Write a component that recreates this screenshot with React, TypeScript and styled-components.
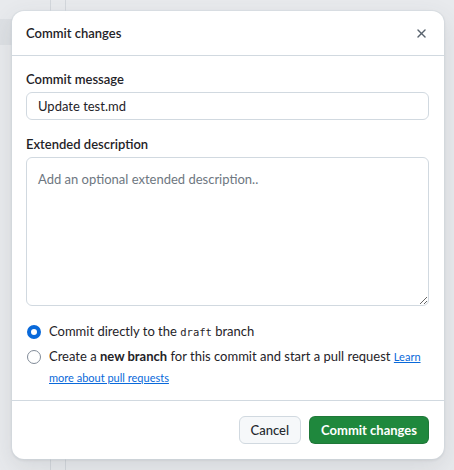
import React from 'react';
import styled, { createGlobalStyle } from 'styled-components';

const GlobalStyle = createGlobalStyle`
  html, body {
    margin: 0;
    padding: 0;
  }
  body {
    font-family: Lato, "Liberation Sans", sans-serif;
    color: #1f2328;
  }
`;

// Dimmed editor page behind the dialog: two gutter lines and a tab strip.
const Backdrop = styled.div`
  width: 454px;
  height: 470px;
  box-sizing: border-box;
  padding: 11px 10px 11px 12px;
  background-color: #e8eaed;
  background-image:
    linear-gradient(#dde0e4, #dde0e4),
    linear-gradient(#d3d7dc, #d3d7dc),
    linear-gradient(#d3d7dc, #d3d7dc);
  background-size: 12px 26px, 1px 100%, 1px 100%;
  background-position: 0 19px, 50px 0, 65px 0;
  background-repeat: no-repeat;
`;

const Dialog = styled.div`
  display: flex;
  flex-direction: column;
  height: 100%;
  background: #ffffff;
  border-radius: 12px;
  box-shadow: 0 0 0 1px rgba(209, 217, 224, 0.5), 0 8px 24px rgba(66, 74, 83, 0.12),
    0 1px 3px rgba(31, 35, 40, 0.12);
  overflow: hidden;
`;

const Header = styled.div`
  display: flex;
  align-items: center;
  justify-content: space-between;
  height: 44px;
  padding: 0 14px;
  border-bottom: 1px solid #d1d9e0;
  flex-shrink: 0;
`;

const Title = styled.h1`
  margin: 0;
  font-size: 13px;
  font-weight: 600;
  line-height: 20px;
`;

const CloseButton = styled.button`
  display: flex;
  align-items: center;
  justify-content: center;
  width: 24px;
  height: 24px;
  margin-right: -3px;
  padding: 0;
  border: 0;
  background: transparent;
  color: #59636e;
  cursor: pointer;
`;

const Body = styled.div`
  flex: 1;
  display: flex;
  flex-direction: column;
  padding: 13px 15px 0 14px;
`;

const Label = styled.label`
  display: block;
  font-size: 13px;
  font-weight: 600;
  line-height: 20px;
  margin-bottom: 3px;
`;

const Field = styled.div<{ $gap?: number }>`
  margin-bottom: ${(p) => p.$gap ?? 0}px;
`;

const TextInput = styled.input`
  display: block;
  width: 100%;
  box-sizing: border-box;
  height: 28px;
  padding: 0 11px;
  border: 1px solid #d1d9e0;
  border-radius: 6px;
  font-family: inherit;
  font-size: 13px;
  color: #1f2328;
  background: #ffffff;
  outline: none;
`;

const TextArea = styled.textarea`
  display: block;
  width: 100%;
  box-sizing: border-box;
  height: 149px;
  padding: 11px 11px;
  border: 1px solid #d1d9e0;
  border-radius: 6px;
  font-family: inherit;
  font-size: 13px;
  line-height: 20px;
  color: #1f2328;
  background: #ffffff;
  outline: none;
  resize: vertical;

  &::placeholder {
    color: #6e7781;
  }
`;

const Choices = styled.div`
  display: flex;
  flex-direction: column;
  gap: 4px;
  margin-top: 15px;
`;

const Choice = styled.label`
  display: flex;
  align-items: flex-start;
  gap: 8px;
  font-size: 13px;
  line-height: 21px;
  cursor: pointer;
`;

const Radio = styled.span<{ $checked?: boolean }>`
  flex-shrink: 0;
  box-sizing: border-box;
  width: 14px;
  height: 14px;
  margin: 4px 0 0 1px;
  border-radius: 50%;
  background: #ffffff;
  border: ${(p) => (p.$checked ? '4px solid #0969da' : '1px solid #818b98')};
`;

const Code = styled.code`
  font-family: "DejaVu Sans Mono", "Liberation Mono", monospace;
  font-size: 10.5px;
  line-height: 1;
`;

const LearnLink = styled.a`
  font-size: 11px;
  line-height: 1;
  color: #0969da;
  text-decoration: underline;
`;

const Footer = styled.div`
  display: flex;
  justify-content: flex-end;
  gap: 8px;
  padding: 15px 15px 15px 14px;
  border-top: 1px solid #d1d9e0;
  flex-shrink: 0;
`;

const Button = styled.button<{ $primary?: boolean }>`
  height: 28px;
  padding: 0 11px;
  border-radius: 6px;
  font-family: inherit;
  font-size: 13px;
  font-weight: ${(p) => (p.$primary ? 700 : 500)};
  cursor: pointer;
  color: ${(p) => (p.$primary ? '#ffffff' : '#25292e')};
  background: ${(p) => (p.$primary ? '#1f883d' : '#f6f8fa')};
  border: 1px solid ${(p) => (p.$primary ? 'rgba(31, 35, 40, 0.15)' : '#d1d9e0')};
`;

const XIcon = () => (
  <svg width="15" height="15" viewBox="0 0 16 16" fill="currentColor">
    <path d="M3.72 3.72a.75.75 0 0 1 1.06 0L8 6.94l3.22-3.22a.749.749 0 0 1 1.275.326.749.749 0 0 1-.215.734L9.06 8l3.22 3.22a.749.749 0 0 1-.326 1.275.749.749 0 0 1-.734-.215L8 9.06l-3.22 3.22a.751.751 0 0 1-1.042-.018.751.751 0 0 1-.018-1.042L6.94 8 3.72 4.78a.75.75 0 0 1 0-1.06Z" />
  </svg>
);

export default function App() {
  return (
    <>
      <GlobalStyle />
      <Backdrop>
        <Dialog role="dialog" aria-labelledby="commit-title">
          <Header>
            <Title id="commit-title">Commit changes</Title>
            <CloseButton aria-label="Close">
              <XIcon />
            </CloseButton>
          </Header>
          <Body>
            <Field $gap={14}>
              <Label htmlFor="commit-message">Commit message</Label>
              <TextInput id="commit-message" defaultValue="Update test.md" />
            </Field>
            <Field>
              <Label htmlFor="commit-description">Extended description</Label>
              <TextArea id="commit-description" placeholder="Add an optional extended description.." />
            </Field>
            <Choices>
              <Choice>
                <Radio $checked />
                <span>
                  Commit directly to the <Code>draft</Code> branch
                </span>
              </Choice>
              <Choice>
                <Radio />
                <span>
                  Create a <b>new branch</b> for this commit and start a pull request{' '}
                  <LearnLink href="#">Learn more about pull requests</LearnLink>
                </span>
              </Choice>
            </Choices>
          </Body>
          <Footer>
            <Button>Cancel</Button>
            <Button $primary>Commit changes</Button>
          </Footer>
        </Dialog>
      </Backdrop>
    </>
  );
}
